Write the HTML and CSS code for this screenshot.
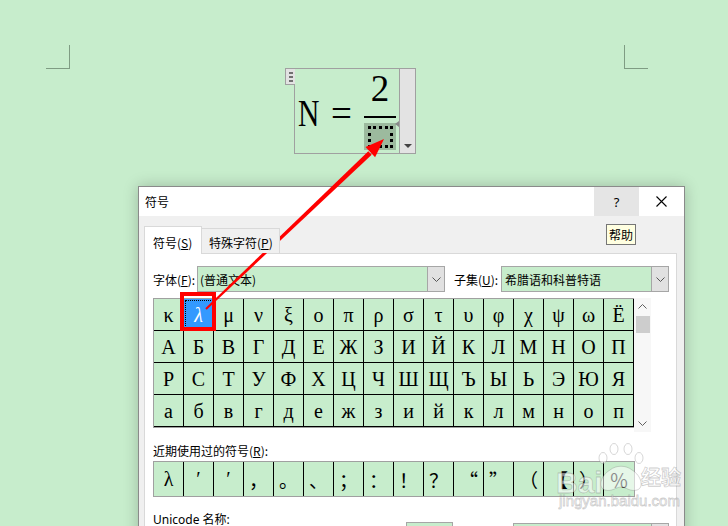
FILE: index.html
```html
<!DOCTYPE html>
<html lang="zh-CN">
<head>
<meta charset="utf-8">
<title>符号</title>
<link rel="stylesheet" href="styles.css">
</head>
<body>
<div class="page">
  <div class="corner corner-l"></div>
  <div class="corner corner-r"></div>

  <div class="eq">
    <div class="eq-handle"><i></i><i></i><i></i></div>
    <div class="eq-body">
      <span class="eq-n">N</span>
      <span class="eq-eq">=</span>
      <div class="frac">
        <span class="num">2</span>
        <span class="bar"></span>
        <span class="ph"><span class="ph-dots"></span></span>
      </div>
      <span class="eq-mark"></span>
    </div>
    <div class="eq-scroll"><span class="tri"></span></div>
  </div>

  <div class="dialog">
    <div class="titlebar">
      <span class="title">符号</span>
      <span class="tb-help">?</span>
      <span class="tb-close"><svg width="11" height="11" viewBox="0 0 11 11"><path d="M0.5 0.5 L10.5 10.5 M10.5 0.5 L0.5 10.5" stroke="#000" stroke-width="1.1" fill="none"/></svg></span>
    </div>
    <div class="dbody">
      <div class="tabs">
        <div class="tab active">符号(<u>S</u>)</div>
        <div class="tab inactive">特殊字符(<u>P</u>)</div>
      </div>
      <div class="panel">
        <div class="sel-row">
          <span class="lbl lbl-font">字体(<u>F</u>):</span>
          <div class="combo combo-font"><span class="combo-text">(普通文本)</span><span class="drop"><svg width="9" height="5" viewBox="0 0 9 5"><path d="M0.5 0.5 L4.5 4.5 L8.5 0.5" stroke="#555" fill="none"/></svg></span></div>
          <span class="lbl lbl-sub">子集(<u>U</u>):</span>
          <div class="combo combo-sub"><span class="combo-text">希腊语和科普特语</span><span class="drop"><svg width="9" height="5" viewBox="0 0 9 5"><path d="M0.5 0.5 L4.5 4.5 L8.5 0.5" stroke="#555" fill="none"/></svg></span></div>
        </div>

        <div class="charmap">
          <div class="grid">
            <span class="c">κ</span><span class="c sel">λ</span><span class="c">μ</span><span class="c">ν</span><span class="c">ξ</span><span class="c">ο</span><span class="c">π</span><span class="c">ρ</span><span class="c">σ</span><span class="c">τ</span><span class="c">υ</span><span class="c">φ</span><span class="c">χ</span><span class="c">ψ</span><span class="c">ω</span><span class="c">Ё</span>
            <span class="c">А</span><span class="c">Б</span><span class="c">В</span><span class="c">Г</span><span class="c">Д</span><span class="c">Е</span><span class="c">Ж</span><span class="c">З</span><span class="c">И</span><span class="c">Й</span><span class="c">К</span><span class="c">Л</span><span class="c">М</span><span class="c">Н</span><span class="c">О</span><span class="c">П</span>
            <span class="c">Р</span><span class="c">С</span><span class="c">Т</span><span class="c">У</span><span class="c">Ф</span><span class="c">Х</span><span class="c">Ц</span><span class="c">Ч</span><span class="c">Ш</span><span class="c">Щ</span><span class="c">Ъ</span><span class="c">Ы</span><span class="c">Ь</span><span class="c">Э</span><span class="c">Ю</span><span class="c">Я</span>
            <span class="c">а</span><span class="c">б</span><span class="c">в</span><span class="c">г</span><span class="c">д</span><span class="c">е</span><span class="c">ж</span><span class="c">з</span><span class="c">и</span><span class="c">й</span><span class="c">к</span><span class="c">л</span><span class="c">м</span><span class="c">н</span><span class="c">о</span><span class="c">п</span>
          </div>
          <div class="vscroll">
            <span class="sb-btn"><svg width="9" height="5" viewBox="0 0 9 5"><path d="M0.5 4.5 L4.5 0.5 L8.5 4.5" stroke="#606060" fill="none"/></svg></span>
            <span class="sb-thumb"></span>
            <span class="sb-space"></span>
            <span class="sb-btn sb-down"><svg width="9" height="5" viewBox="0 0 9 5"><path d="M0.5 0.5 L4.5 4.5 L8.5 0.5" stroke="#606060" fill="none"/></svg></span>
          </div>
        </div>

        <div class="recent-lbl">近期使用过的符号(<u>R</u>):</div>
        <div class="recent">
          <span class="r">λ</span><span class="r">′</span><span class="r">′</span><span class="r cjk">，</span><span class="r cjk">。</span><span class="r cjk">、</span><span class="r cjk">；</span><span class="r cjk">：</span><span class="r cjk">！</span><span class="r cjk">？</span><span class="r cjk">“</span><span class="r cjk">”</span><span class="r cjk">（</span><span class="r cjk">【</span><span class="r cjk">）</span><span class="r cjk">％</span>
        </div>

        <div class="bottom-row">
          <span class="lbl uni-lbl">Unicode 名称:</span>
          <span class="box1"></span>
          <span class="box2"><span class="drop"></span></span>
        </div>
      </div>
    </div>
    <div class="tooltip">帮助</div>
  </div>

  <svg class="overlay" width="728" height="526" viewBox="0 0 728 526">
    <g class="wm">
      <ellipse cx="603" cy="458" rx="4" ry="5.5"/>
      <ellipse cx="614" cy="449" rx="4" ry="5.5"/>
      <ellipse cx="628" cy="449" rx="4" ry="5.5"/>
      <ellipse cx="639" cy="458" rx="4" ry="5.5"/>
      <path d="M605 490 C598 488 600 476 610 470 C616 465 626 465 632 470 C642 476 644 488 637 490 C630 492 626 487 621 487 C616 487 612 492 605 490 Z"/>
      <text x="556" y="493" class="wm-big">Bai</text>
      <text x="641" y="485" class="wm-cn">经验</text>
      <text x="559" y="506" class="wm-url">jingyan.baidu.com</text>
    </g>
    <rect x="182" y="294" width="32" height="35" fill="none" stroke="#ff0000" stroke-width="4"/>
    <polygon points="205.3,308.3 368.3,151.2 371.7,154.8 206.7,309.7" fill="#ff0000"/>
    <polygon points="384,139 375.1,157.2 365.5,147" fill="#ff0000"/>
  </svg>
</div>
</body>
</html>
```

FILE: styles.css
```css
* { box-sizing: border-box; }
html, body { margin: 0; padding: 0; }
body {
  width: 728px;
  height: 526px;
  overflow: hidden;
  background: #c7edcc;
  font-family: "Noto Sans CJK SC", "Noto Sans", sans-serif;
  font-size: 12px;
  color: #000;
}
u { text-decoration: underline; text-underline-offset: 1px; }
.page { position: relative; width: 728px; height: 526px; }

/* page corner marks */
.corner { position: absolute; width: 24px; height: 24px; border: 0 solid #7f9c83; }
.corner-l { left: 46px; top: 45px; border-right-width: 1px; border-bottom-width: 1px; }
.corner-r { left: 624px; top: 45px; border-left-width: 1px; border-bottom-width: 1px; }

/* equation object */
.eq {
  position: absolute;
  left: 294px; top: 68px;
  width: 122px; height: 86px;
  border: 1px solid #a0a0a0;
  display: flex;
  background: #c7edcc;
}
.eq-handle {
  position: absolute;
  left: -10px; top: -1px;
  width: 10px; height: 17px;
  background: #e2e2e2;
  border: 1px solid #a0a0a0;
  border-right: none;
  display: flex; flex-direction: column;
  align-items: center; justify-content: center;
  gap: 2px;
}
.eq-handle i { display: block; width: 4px; height: 2px; background: #707070; }
.eq-body {
  flex: 1;
  position: relative;
  display: flex;
  align-items: flex-start;
  padding-left: 3px;
  font-family: "Liberation Serif", "DejaVu Serif", serif;
  font-size: 37px;
  line-height: 37px;
}
.eq-n { display: inline-block; width: 21px; margin-top: 26px; transform: scaleX(0.8); transform-origin: left center; }
.eq-eq { display: inline-block; margin-top: 26px; margin-left: 12px; }
.frac { display: flex; flex-direction: column; align-items: center; width: 32px; margin-left: 12px; }
.num { display: block; margin-top: 1px; height: 37px; }
.bar { display: block; width: 32px; height: 2px; background: #000; margin-top: 9px; }
.ph {
  display: flex;
  width: 32px; height: 27px;
  margin-top: 5px;
  background: #9cba9e;
  padding: 3px 0 0 4px;
}
.ph-dots { display: block; width: 25px; height: 22px; border: 3px dotted #000; }
.eq-mark {
  position: absolute;
  right: 0; top: 52px;
  width: 0; height: 0;
  border-top: 3px solid transparent;
  border-bottom: 3px solid transparent;
  border-right: 4px solid #8a8a8a;
}
.eq-scroll {
  width: 16px;
  border-left: 1px solid #a0a0a0;
  background: #e3e3e3;
  display: flex; flex-direction: column;
  justify-content: flex-end; align-items: center;
  padding-bottom: 5px;
}
.tri { width: 0; height: 0; border-left: 4px solid transparent; border-right: 4px solid transparent; border-top: 4px solid #444; }

/* dialog */
.dialog {
  position: absolute;
  left: 138px; top: 186px;
  width: 547px; height: 380px;
  border: 1px solid #8a8a8a;
  background: #f0f0f0;
  box-shadow: 0 0 14px rgba(0, 0, 0, 0.22);
}
.titlebar { height: 29px; background: #fff; display: flex; }
.title { flex: 1; display: flex; align-items: center; padding-left: 6px; }
.tb-help {
  width: 45px; background: #e5e5e5;
  display: flex; align-items: center; justify-content: center;
  font-family: "Noto Sans", sans-serif; font-size: 13px;
}
.tb-close { width: 45px; display: flex; align-items: center; justify-content: center; }
.dbody { padding: 10px 7px 0 5px; }

.tabs { display: flex; align-items: flex-end; height: 27px; position: relative; z-index: 1; }
.tab { display: flex; align-items: center; padding-top: 3px; border: 1px solid #d9d9d9; border-bottom: none; }
.tab.active { width: 58px; height: 28px; background: #fff; padding-left: 8px; margin-bottom: -1px; }
.tab.inactive { width: 78px; height: 25px; padding-left: 7px; border-left: none; background: #f0f0f0; }

.panel {
  background: #fff;
  border: 1px solid #d9d9d9;
  height: 320px;
  padding: 12px 7px 0 8px;
}
.sel-row { display: flex; align-items: center; height: 26px; }
.lbl { white-space: nowrap; }
.lbl-font { width: 44px; }
.lbl-sub { width: 47px; margin-left: 9px; }
.combo {
  display: flex;
  height: 26px;
  border: 1px solid #a6a6a6;
  background: #c7edcc;
}
.combo-font { width: 248px; }
.combo-sub { width: 168px; }
.combo-text { flex: 1; display: flex; align-items: center; padding-left: 2px; font-size: 12px; }
.combo-sub .combo-text { padding-left: 3px; }
.drop {
  width: 17px;
  background: #e1e1e1;
  border-left: 1px solid #a6a6a6;
  display: flex; align-items: center; justify-content: center;
}

.charmap { display: flex; margin-top: 6px; height: 134px; }
.grid {
  display: grid;
  grid-template-columns: repeat(16, 30px);
  grid-auto-rows: 32px;
  width: 481px; height: 130px;
  border: 1px solid #a0a0a0;
  border-right: none;
}
.c, .r {
  display: flex; align-items: center; justify-content: center;
  background: #c7edcc;
  border-right: 1px solid #000;
  font-family: "Liberation Serif", "DejaVu Serif", "Noto Sans CJK SC", serif;
  font-size: 20px;
  line-height: 1;
}
.c { border-bottom: 1px solid #000; }
.c.sel {
  background: #3399ff;
  color: #fff;
  font-style: italic;
  outline: 1px dotted #000;
  outline-offset: -2px;
}
.vscroll {
  width: 17px;
  background: #f7f7f7;
  display: flex; flex-direction: column;
}
.sb-btn { height: 17px; display: flex; align-items: center; justify-content: center; }
.sb-thumb { height: 17px; margin: 1px 1px 0 2px; background: #cdcdcd; }
.sb-space { flex: 1; }

.recent-lbl { margin-top: 10px; line-height: 17px; height: 17px; }
.recent {
  display: grid;
  grid-template-columns: repeat(16, 30px);
  width: 482px; height: 36px;
  margin-top: 2px;
  border: 1px solid #a0a0a0;
}
.r:last-child { border-right: none; }
.r.cjk { font-family: "Noto Sans CJK SC", sans-serif; font-size: 19px; }

.bottom-row { display: flex; align-items: flex-start; margin-top: 14px; }
.uni-lbl { width: 254px; line-height: 17px; font-family: "Noto Sans", "Noto Sans CJK SC", sans-serif; }
.box1 { width: 47px; height: 24px; margin-top: 11px; border: 1px solid #a6a6a6; background: #c7edcc; }
.box2 { display: flex; justify-content: flex-end; width: 157px; height: 24px; margin-top: 12px; margin-left: 60px; border: 1px solid #a6a6a6; background: #c7edcc; }

.tooltip {
  position: absolute;
  left: 467px; top: 37px;
  width: 30px; height: 21px;
  border: 1px solid #767676;
  background: #ffffe1;
  display: flex; align-items: center; justify-content: center;
  font-size: 12px;
}

/* overlay: annotation arrow and watermark */
.overlay { position: absolute; left: 0; top: 0; pointer-events: none; }
.wm { fill: rgba(255, 255, 255, 0.55); stroke: rgba(110, 110, 110, 0.35); stroke-width: 0.8; }
.wm-big { font-family: "Liberation Sans", sans-serif; font-size: 30px; font-weight: bold; }
.wm-cn { font-family: "Noto Sans CJK SC", sans-serif; font-size: 20px; font-weight: bold; }
.wm-url { font-family: "Liberation Sans", sans-serif; font-size: 15px; }
```
